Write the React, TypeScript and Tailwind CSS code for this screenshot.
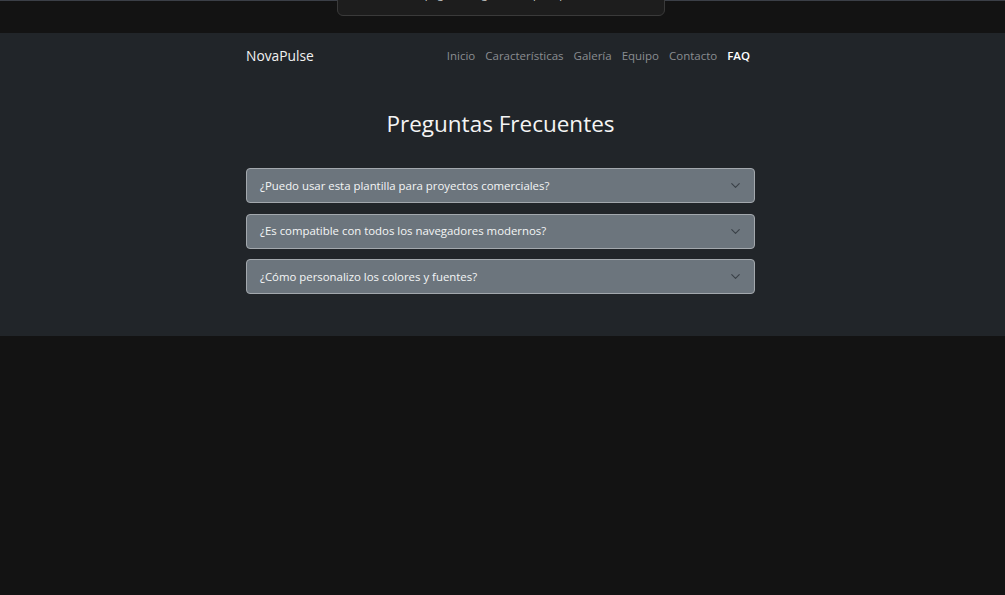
import { ChevronDown } from 'lucide-react'

const links = ['Inicio', 'Características', 'Galería', 'Equipo', 'Contacto']

const faqs = [
  '¿Puedo usar esta plantilla para proyectos comerciales?',
  '¿Es compatible con todos los navegadores modernos?',
  '¿Cómo personalizo los colores y fuentes?',
]

export default function App() {
  return (
    <div
      className="relative min-h-[595px] bg-[#131313] text-white"
      style={{ fontFamily: '"Open Sans", "Liberation Sans", sans-serif' }}
    >
      <div className="h-[33px] border-t border-[#3b3f47] bg-[#131313]" />

      {/* cut-off toast hanging from the top */}
      <div className="absolute left-[337px] top-[-20px] z-10 h-[36px] w-[328px] overflow-hidden rounded-b-md border border-[#3a3a3a] bg-[#1d1d1d]">
        <p className="pt-[5px] text-center text-[11px] text-[#cfcfcf]">Esta página fue generada para pruebas</p>
      </div>

      <section className="bg-[#212529] pb-[42px] pr-[4px]">
        <div className="mx-auto w-[509px]">
          <nav className="flex h-[46px] items-center justify-between">
            <span className="text-[13.8px] text-[#f1f1f1]">NovaPulse</span>
            <ul className="mr-[5px] flex items-center gap-[10px] text-[11.5px]">
              {links.map((l) => (
                <li key={l} className="text-[#8a8d91]">
                  {l}
                </li>
              ))}
              <li className="font-semibold text-white">FAQ</li>
            </ul>
          </nav>

          <h2 className="mt-[30px] text-center text-[22.5px] leading-[30px] text-[#f4f4f4]">Preguntas Frecuentes</h2>

          <div className="mt-[29px] flex flex-col gap-[10.5px]">
            {faqs.map((q) => (
              <div
                key={q}
                className="flex h-[35px] items-center justify-between rounded-[4px] border border-[#a3a8ad] bg-[#6c757d] pl-[13px] pr-[11px]"
              >
                <span className="text-[11.4px] text-[#f4f5f6]">{q}</span>
                <ChevronDown size={15} strokeWidth={1.8} className="text-[#3a4047]" />
              </div>
            ))}
          </div>
        </div>
      </section>
    </div>
  )
}
